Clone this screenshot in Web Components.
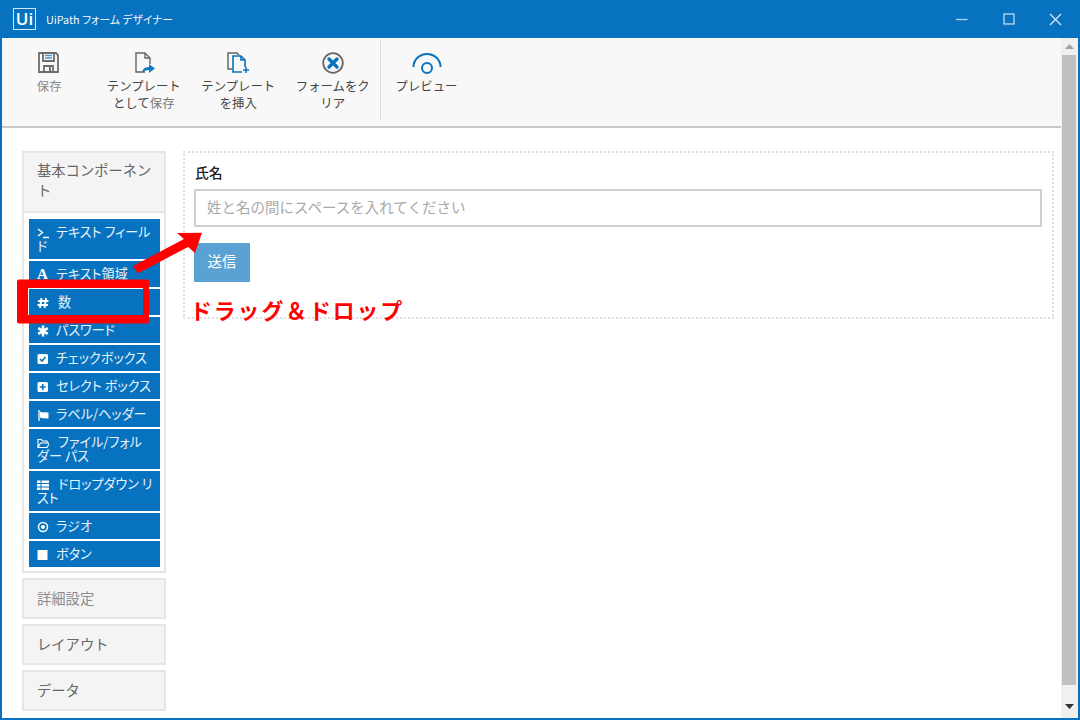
<!DOCTYPE html>
<html lang="ja">
<head>
<meta charset="utf-8">
<title>UiPath フォーム デザイナー</title>
<style>
  html, body { margin: 0; height: 100%; background: #fff; overflow: hidden; }
  body { font-family: "Noto Sans CJK JP", "Open Sans", sans-serif; }
</style>
</head>
<body>
<form-designer>
  <title-bar slot="title">UiPath フォーム デザイナー</title-bar>

  <tool-bar slot="tools">
    <tool-button icon="save" muted>保存</tool-button>
    <tool-button icon="tpl-save">テンプレート<br>として<span style="color:#777">保存</span></tool-button>
    <tool-button icon="tpl-insert">テンプレート<br>を挿入</tool-button>
    <tool-button icon="clear">フォームをク<br>リア</tool-button>
    <tool-button icon="preview" divided>プレビュー</tool-button>
  </tool-bar>

  <palette-panel slot="palette" title-text="基本コンポーネント" open>
    <palette-item icon="terminal">テキスト フィールド</palette-item>
    <palette-item icon="font">テキスト領域</palette-item>
    <palette-item icon="hash">数</palette-item>
    <palette-item icon="asterisk">パスワード</palette-item>
    <palette-item icon="check">チェックボックス</palette-item>
    <palette-item icon="plus">セレクト ボックス</palette-item>
    <palette-item icon="flag">ラベル/ヘッダー</palette-item>
    <palette-item icon="folder">ファイル/フォル<br>ダー パス</palette-item>
    <palette-item icon="list">ドロップダウン リスト</palette-item>
    <palette-item icon="radio">ラジオ</palette-item>
    <palette-item icon="square">ボタン</palette-item>
  </palette-panel>
  <palette-panel slot="palette" title-text="詳細設定" faint></palette-panel>
  <palette-panel slot="palette" title-text="レイアウト"></palette-panel>
  <palette-panel slot="palette" title-text="データ"></palette-panel>

  <form-canvas slot="canvas" label="氏名" placeholder="姓と名の間にスペースを入れてください" submit="送信"></form-canvas>

  <drag-note slot="overlay">ドラッグ＆ドロップ</drag-note>
</form-designer>

<script>
const BLUE = '#0772bf'

class TitleBar extends HTMLElement {
    constructor () {
        super()
        this.attachShadow({ mode: 'open' }).innerHTML = `
          <style>
            :host { display: flex; align-items: center; height: 38px; background: ${BLUE}; color: #fff; }
            .logo {
              box-sizing: border-box; width: 23px; height: 22px; margin: 0 10px 1px 13px;
              border: 1px solid #d5e6f3; display: flex; align-items: center; justify-content: center;
              font: 600 17px/1 "Open Sans", sans-serif;
            }
            .name { flex: 1; font-size: 10.800px; font-feature-settings: "palt"; color: #f2f8fc; }
            svg { display: block; }
            .ctl { display: flex; align-items: center; }
          </style>
          <div class="logo">Ui</div>
          <div class="name"><slot></slot></div>
          <div class="ctl">
            <svg style="margin-right:35px" width="12" height="12" viewBox="0 0 12 12"><path d="M0 6.500h11.500" stroke="#b5d4ea" stroke-width="1.300"/></svg>
            <svg style="margin-right:34px" width="12" height="12" viewBox="0 0 12 12"><rect x="1" y="1" width="10" height="10" fill="none" stroke="#cfe2f1" stroke-width="1.200"/></svg>
            <svg style="margin-right:18px" width="13" height="13" viewBox="0 0 13 13"><path d="M1 1l11 11M12 1L1 12" stroke="#d8e8f4" stroke-width="1.300"/></svg>
          </div>`
    }
}

class ToolBar extends HTMLElement {
    constructor () {
        super()
        this.attachShadow({ mode: 'open' }).innerHTML = `
          <style>
            :host {
              display: flex; height: 88px; background: #f8f8f8; border-bottom: 2px solid #c8c8c8;
            }
          </style>
          <slot></slot>`
    }
}

const TOOL_ICONS = {
    save: `<g fill="none" stroke="#6d6d6d" stroke-width="1.800"><path d="M2 2h17l2 2v17H2z"/><path d="M6 2v8h11V2M7 21v-6h9v6"/></g><path d="M8 4.500h7M8 7h7" stroke="#4f94c9" stroke-width="1.600"/><rect x="12" y="16" width="2" height="4" fill="#6d6d6d"/>`,
    'tpl-save': `<path d="M13 21H4V2h9l5 5v6M13 2v5h5" fill="none" stroke="#666" stroke-width="1.400"/><path d="M10 22c.5-4 3-6 7-6v-3l6 4.500-6 4.500v-3c-3 0-5 1-7 3z" fill="#1577c0"/>`,
    'tpl-insert': `<path d="M6 18H2V2h9l2 2" fill="none" stroke="#666" stroke-width="1.500"/><path d="M16 21H7V5h8l4 4v7M15 5v4h4" fill="none" stroke="${BLUE}" stroke-width="1.600"/><path d="M20 16v6M17 19h6" stroke="${BLUE}" stroke-width="1.500"/>`,
    clear: `<circle cx="12" cy="12" r="9.800" fill="none" stroke="#666" stroke-width="1.800"/><path d="M8 8l8 8M16 8l-8 8" stroke="${BLUE}" stroke-width="3.400" stroke-linecap="round"/>`,
    preview: `<path d="M1.500 16A13.500 13 0 0 1 28.500 16" fill="none" stroke="${BLUE}" stroke-width="2"/><circle cx="15" cy="17" r="5" fill="none" stroke="${BLUE}" stroke-width="2"/>`
}

class ToolButton extends HTMLElement {
    constructor () {
        super()
        this.attachShadow({ mode: 'open' })
    }

    connectedCallback () {
        const name = this.getAttribute('icon')
        const wide = name === 'preview'
        this.shadowRoot.innerHTML = `
          <style>
            :host {
              display: block; box-sizing: border-box; width: ${wide ? 92 : 94.5}px; height: 78px; margin-top: 3px;
              padding-top: 10px; text-align: center;
              font-size: 12.400px; line-height: 17px; color: ${this.hasAttribute('muted') ? '#8a8a8a' : '#444'};
            }
            :host([divided]) { border-left: 1px solid #dcdcdc; }
            svg { display: block; margin: 0 auto 3px; }
          </style>
          <svg width="${wide ? 30 : 24}" height="24" viewBox="0 0 ${wide ? 30 : 24} 24">${TOOL_ICONS[name]}</svg>
          <slot></slot>`
    }
}

class PalettePanel extends HTMLElement {
    constructor () {
        super()
        this.attachShadow({ mode: 'open' })
    }

    connectedCallback () {
        this.shadowRoot.innerHTML = `
          <style>
            :host { display: block; box-sizing: border-box; border: 2px solid #e6e6e6; background: #fff; }
            .head {
              background: #f4f4f4; padding: 8px 8px 9px 13px;
              font-size: 14.300px; line-height: 20px; color: #666;
            }
            :host([faint]) .head { color: #8c8c8c; }
            :host([open]) .head { border-bottom: 2px solid #e6e6e6; padding-bottom: 11px; padding-top: 7px; }
            .items { display: none; flex-direction: column; gap: 2px; padding: 6px 4px 4px 5px; }
            :host([open]) .items { display: flex; }
          </style>
          <div class="head">${this.getAttribute('title-text')}</div>
          <div class="items"><slot></slot></div>`
    }
}

const ITEM_ICONS = {
    terminal: `<path d="M1 2l4.500 3.500L1 9M6 10.500h6" fill="none" stroke="#fff" stroke-width="1.400"/>`,
    hash: `<path d="M4.500 1L3 11M9 1L7.500 11M1 4h10.500M.5 8h10.500" fill="none" stroke="#fff" stroke-width="1.900"/>`,
    asterisk: `<path d="M6 .5v11M1.200 3.200l9.600 5.600M10.800 3.200l-9.600 5.600" fill="none" stroke="#fff" stroke-width="2.600"/>`,
    check: `<rect x=".5" y="1" width="10.500" height="10" rx="1.500" fill="#fff"/><path d="M3 6l2 2 3.500-4" fill="none" stroke="${BLUE}" stroke-width="1.600"/>`,
    plus: `<rect x=".5" y="1" width="10.500" height="10" rx="1.500" fill="#fff"/><path d="M5.700 3v6M2.700 6h6" fill="none" stroke="${BLUE}" stroke-width="1.600"/>`,
    flag: `<path d="M2 1v11" stroke="#fff" stroke-width="1.300"/><path d="M3 2.500c2 1 3 1 4.500.8s3 .2 4 .2v6c-1.500 0-3-.5-4.500-.3S5 9.300 3 8.500z" fill="#fff"/>`,
    folder: `<path d="M1 10.500V2.500h3.500l1 1.500H10v2M1 10.500h9l2.500-4.500H3.500z" fill="none" stroke="#fff" stroke-width="1.100"/>`,
    list: `<path d="M0 1.500h3.500v2.500H0zM4.500 1.500H12v2.500H4.500zM0 5h3.500v2.500H0zM4.500 5H12v2.500H4.500zM0 8.500h3.500V11H0zM4.500 8.500H12V11H4.500z" fill="#fff"/>`,
    radio: `<circle cx="6" cy="6" r="4.500" fill="none" stroke="#fff" stroke-width="1.500"/><circle cx="6" cy="6" r="2" fill="#fff"/>`,
    square: `<rect x=".5" y="1" width="10" height="10" fill="#fff"/>`
}

class PaletteItem extends HTMLElement {
    constructor () {
        super()
        this.attachShadow({ mode: 'open' })
    }

    connectedCallback () {
        const name = this.getAttribute('icon')
        const gap = name === 'folder' || name === 'list' || name === 'hash' ? 9 : 7
        const icon = name === 'font'
            ? '<span class="glyph">A</span>'
            : `<svg width="12" height="12" viewBox="0 0 12 12">${ITEM_ICONS[name]}</svg>`
        this.shadowRoot.innerHTML = `
          <style>
            :host {
              display: block; padding: 6px 5px 6px 8px; background: ${BLUE}; color: #e9f3fa;
              font-size: 13.100px; line-height: 14px; font-feature-settings: "palt";
            }
            svg, .glyph { display: inline-block; width: 12px; margin-right: ${gap}px; vertical-align: -2px; }
            .glyph { font: bold 15px/14px "Liberation Serif", serif; vertical-align: 0; color: #fff; }
          </style>
          ${icon}<slot></slot>`
    }
}

class FormCanvas extends HTMLElement {
    constructor () {
        super()
        this.attachShadow({ mode: 'open' })
    }

    connectedCallback () {
        this.shadowRoot.innerHTML = `
          <style>
            :host {
              display: block; box-sizing: border-box; height: 168px; padding: 10px 10px 0 9px;
              border: 2px dotted #dedede; color: #333;
            }
            .label { font-size: 13.800px; font-weight: 500; line-height: 18px; margin: 0 0 8px 1px; color: #222; }
            .input {
              box-sizing: border-box; height: 38px; padding: 0 11px; border: 2px solid #cfcfcf;
              font-size: 14.500px; line-height: 32px; color: #a9a9a9;
            }
            .send {
              width: 56px; height: 39px; margin-top: 16px; background: #5ba2d4; color: #fff;
              font-size: 14.400px; line-height: 35px; text-align: center;
            }
          </style>
          <div class="label">${this.getAttribute('label')}</div>
          <div class="input" role="textbox">${this.getAttribute('placeholder')}</div>
          <div class="send" role="button">${this.getAttribute('submit')}</div>`
    }
}

class VScrollbar extends HTMLElement {
    constructor () {
        super()
        this.attachShadow({ mode: 'open' }).innerHTML = `
          <style>
            :host { display: flex; flex-direction: column; width: 17px; background: #f0f0f0; }
            .btn { height: 17px; display: flex; align-items: center; justify-content: center; }
            .thumb { flex: 1; margin: 0 2px 0 1px; background: #c0c0c0; }
            svg { display: block; }
          </style>
          <div class="btn"><svg width="9" height="5" viewBox="0 0 9 5"><path d="M4.500 0L9 5H0z" fill="#a3a3a3"/></svg></div>
          <div class="thumb" style="margin-bottom:16px"></div>
          <div class="btn" style="padding-bottom:7px;height:10px"><svg width="9" height="5" viewBox="0 0 9 5"><path d="M0 0h9L4.500 5z" fill="#333"/></svg></div>`
    }
}

class DragNote extends HTMLElement {
    constructor () {
        super()
        this.attachShadow({ mode: 'open' }).innerHTML = `
          <style>
            :host { position: absolute; inset: 0; display: block; pointer-events: none; }
            svg { position: absolute; left: 0; top: 0; }
            .txt {
              position: absolute; left: 190px; top: 295px; white-space: nowrap;
              font-size: 21.800px; line-height: 30px; font-weight: 700; letter-spacing: 2px; color: #f00;
            }
          </style>
          <svg width="1080" height="720" viewBox="0 0 1080 720">
            <path fill="#f00" fill-rule="evenodd" d="M19 279.500h128q2 0 2 2v40q0 2-2 2H19q-2 0-2-2v-40q0-2 2-2zM28 288v27h115v-27z"/>
            <path fill="#f00" d="M133 266l51-27-7-6 25-.300-7 20.300-6.800-6.100-50.500 26.500z"/>
          </svg>
          <div class="txt"><slot></slot></div>`
    }
}

class FormDesigner extends HTMLElement {
    constructor () {
        super()
        this.attachShadow({ mode: 'open' }).innerHTML = `
          <style>
            :host {
              display: flex; flex-direction: column; position: relative; box-sizing: border-box;
              width: 1080px; height: 720px; overflow: hidden;
              border: solid ${BLUE}; border-width: 0 2px 2px 2px;
            }
            .titlewrap { margin: 0 -2px; }
            .body { flex: 1; display: flex; min-height: 0; }
            .main { flex: 1; display: flex; flex-direction: column; min-width: 0; }
            .work { flex: 1; display: flex; gap: 17px; padding: 23px 7px 0 20px; min-height: 0; }
            .side { width: 144px; flex: none; display: flex; flex-direction: column; gap: 5px; }
            .stage { flex: 1; min-width: 0; }
            .overlay { position: absolute; inset: 0 -2px -2px -2px; pointer-events: none; }
          </style>
          <div class="titlewrap"><slot name="title"></slot></div>
          <div class="body">
            <div class="main">
              <slot name="tools"></slot>
              <div class="work">
                <div class="side"><slot name="palette"></slot></div>
                <div class="stage"><slot name="canvas"></slot></div>
              </div>
            </div>
            <v-scrollbar></v-scrollbar>
          </div>
          <div class="overlay"><slot name="overlay"></slot></div>`
    }
}

customElements.define('title-bar', TitleBar)
customElements.define('tool-bar', ToolBar)
customElements.define('tool-button', ToolButton)
customElements.define('palette-panel', PalettePanel)
customElements.define('palette-item', PaletteItem)
customElements.define('form-canvas', FormCanvas)
customElements.define('v-scrollbar', VScrollbar)
customElements.define('drag-note', DragNote)
customElements.define('form-designer', FormDesigner)
</script>
</body>
</html>
